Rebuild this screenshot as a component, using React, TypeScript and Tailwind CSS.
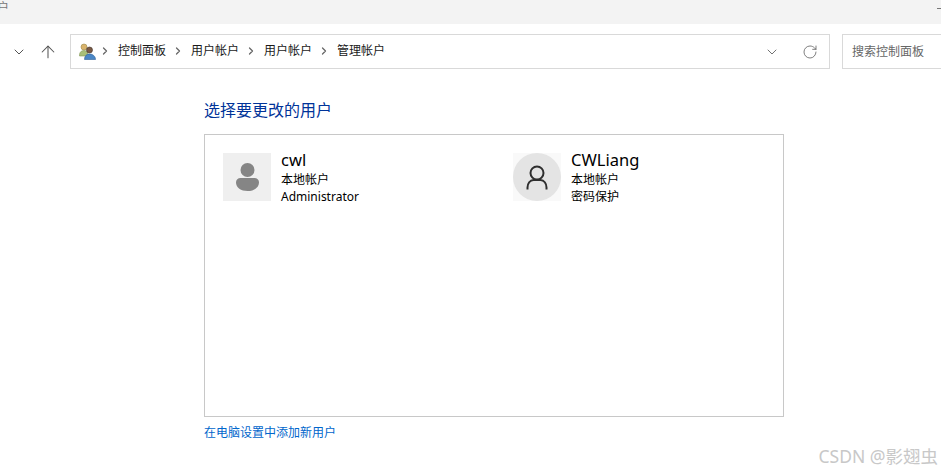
import { ArrowUp, ChevronDown, ChevronRight, RotateCw } from "lucide-react";

const font = "font-['Noto_Sans','Noto_Sans_CJK_SC',sans-serif]";

function UsersIcon() {
  return (
    <svg width="17" height="17" viewBox="0 0 17 17" className="shrink-0">
      <circle cx="5" cy="4" r="3" fill="#d9b36c" stroke="#9a8a4a" strokeWidth="0.6" />
      <path d="M0.500 12c0-3 2-4.500 4.500-4.500s4 1.500 4 4.500v1h-8.500z" fill="#a9bf78" stroke="#84985a" strokeWidth="0.6" />
      <circle cx="10.500" cy="7" r="3" fill="#7a5a44" stroke="#3f3028" strokeWidth="0.6" />
      <path d="M5.500 16.500c0-3.500 2-5.500 5-5.500s6 2 6 5.500z" fill="#4a86c5" stroke="#2f5f95" strokeWidth="0.6" />
    </svg>
  );
}

function Crumb({ label }: { label: string }) {
  return (
    <>
      <span className="text-[12px] leading-none text-[#1a1a1a]">{label}</span>
      <ChevronRight className="ml-[6px] mr-[7px] h-3 w-3 text-[#666]" strokeWidth={2.5} />
    </>
  );
}

function UserCard({
  name,
  lines,
  avatar,
}: {
  name: string;
  lines: string[];
  avatar: React.ReactNode;
}) {
  return (
    <div className="flex w-[290px] shrink-0 gap-[10px]">
      {avatar}
      <div className="-mt-[2px] flex flex-col">
        <div className="mb-[2px] text-[16.5px] leading-[18px] text-black">{name}</div>
        {lines.map((l) => (
          <div key={l} className="text-[12px] leading-[17px] text-black">
            {l}
          </div>
        ))}
      </div>
    </div>
  );
}

export default function App() {
  return (
    <div className={`relative h-[472px] w-[941px] overflow-hidden bg-white ${font}`}>
      <div className="flex h-6 items-start justify-between bg-[#f3f3f3]">
        <span className="-ml-[3px] mt-px text-[12px] leading-[14px] text-[#777]">户</span>
        <span className="mt-[8px] h-px w-[4px] bg-[#777]" />
      </div>

      <div className="mt-[10px] flex h-[35px] items-center pl-[11px]">
        <ChevronDown className="h-4 w-4 text-[#555]" strokeWidth={1.5} />
        <ArrowUp className="ml-[11px] h-5 w-5 text-[#555]" strokeWidth={1.25} />
        <div className="ml-[12px] flex h-[35px] w-[760px] shrink-0 items-center border border-[#d9d9d9] pl-[8px] pr-[11px]">
          <UsersIcon />
          <div className="mb-[2px] ml-[3px] flex items-center">
            <ChevronRight className="mr-[7px] h-3 w-3 text-[#666]" strokeWidth={2.5} />
            <Crumb label="控制面板" />
            <Crumb label="用户帐户" />
            <Crumb label="用户帐户" />
            <span className="text-[12px] leading-none text-[#1a1a1a]">管理帐户</span>
          </div>
          <ChevronDown className="ml-auto h-4 w-4 text-[#555]" strokeWidth={1.25} />
          <RotateCw className="ml-[22px] h-4 w-4 text-[#666]" strokeWidth={1.25} />
        </div>
        <div className="ml-[12px] flex h-[35px] flex-1 items-center border border-r-0 border-[#d9d9d9] pl-[9px] text-[12px] text-[#666]">
          搜索控制面板
        </div>
      </div>

      <div className="ml-[204px] mt-[29px] w-[580px]">
        <h1 className="text-[16px] leading-[24px] font-normal text-[#003399]">选择要更改的用户</h1>
        <div className="mt-[12px] flex h-[283px] items-start border border-[#c8c8c8] pl-[18px] pt-[18px]">
          <UserCard
            name="cwl"
            lines={["本地帐户", "Administrator"]}
            avatar={
              <div className="flex h-12 w-12 shrink-0 items-center justify-center bg-[#efefef]">
                <svg width="23" height="28" viewBox="0 0 23 28">
                  <circle cx="11.500" cy="7" r="7" fill="#858585" />
                  <path d="M0 19.500c0-3 2-4.500 4.500-4.500h14c2.500 0 4.500 1.500 4.500 4.500 0 5-5 8.500-11.500 8.500S0 24.500 0 19.500z" fill="#858585" />
                </svg>
              </div>
            }
          />
          <UserCard
            name="CWLiang"
            lines={["本地帐户", "密码保护"]}
            avatar={
              <div className="h-12 w-12 shrink-0 bg-[#f9f9f9]">
                <div className="flex h-12 w-12 items-center justify-center rounded-full bg-[#e4e4e4]">
                  <svg width="22" height="25" viewBox="0 0 22 25" fill="none" stroke="#2e2e2e" strokeWidth="2">
                    <circle cx="11" cy="8" r="6.500" />
                    <path d="M1.500 24.500v-2c0-4 2.500-7.500 6-7.500h7c3.500 0 6 3.500 6 7.500v2" />
                  </svg>
                </div>
              </div>
            }
          />
        </div>
        <div className="mt-[7px] text-[12px] leading-[18px] text-[#0066cc]">在电脑设置中添加新用户</div>
      </div>

      <div className="absolute bottom-[4px] right-[3px] text-[17.500px] leading-[24px] text-[#c8c8c8]">CSDN @影翅虫</div>
    </div>
  );
}
